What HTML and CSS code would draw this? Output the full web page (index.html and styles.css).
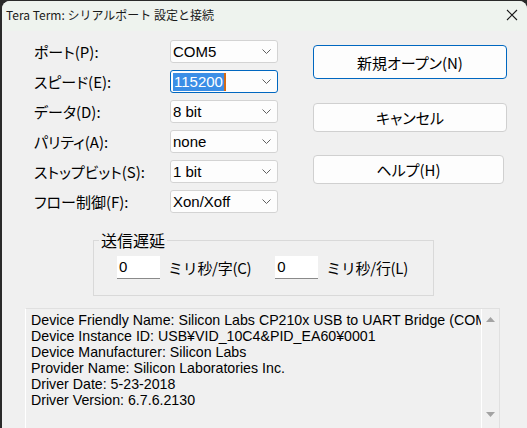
FILE: index.html
```html
<!DOCTYPE html>
<html lang="ja">
<head>
<meta charset="utf-8">
<link rel="stylesheet" href="styles.css">
</head>
<body>
<div class="window">
  <div class="titlebar">
    <span class="title">Tera Term: シリアルポート 設定と接続</span>
    <svg class="close" width="12" height="12" viewBox="0 0 12 12"><path d="M1 1L11 11M11 1L1 11" stroke="#1a1a1a" stroke-width="1.1" fill="none"/></svg>
  </div>
  <div class="content">
    <div class="top">
      <div class="form">
        <div class="row"><span class="label">ポート(P):</span><div class="combo"><span class="val">COM5</span><svg class="chev" width="9" height="5" viewBox="0 0 9 5"><path d="M0.5 0.5L4.5 4.5L8.5 0.5" stroke="#606060" fill="none"/></svg></div></div>
        <div class="row"><span class="label">スピード(E):</span><div class="combo focus"><span class="val"><span class="sel">115200</span><span class="caret"></span></span><svg class="chev" width="9" height="5" viewBox="0 0 9 5"><path d="M0.5 0.5L4.5 4.5L8.5 0.5" stroke="#606060" fill="none"/></svg></div></div>
        <div class="row"><span class="label">データ(D):</span><div class="combo"><span class="val">8 bit</span><svg class="chev" width="9" height="5" viewBox="0 0 9 5"><path d="M0.5 0.5L4.5 4.5L8.5 0.5" stroke="#606060" fill="none"/></svg></div></div>
        <div class="row"><span class="label">パリティ(A):</span><div class="combo"><span class="val">none</span><svg class="chev" width="9" height="5" viewBox="0 0 9 5"><path d="M0.5 0.5L4.5 4.5L8.5 0.5" stroke="#606060" fill="none"/></svg></div></div>
        <div class="row"><span class="label">ストップビット(S):</span><div class="combo"><span class="val">1 bit</span><svg class="chev" width="9" height="5" viewBox="0 0 9 5"><path d="M0.5 0.5L4.5 4.5L8.5 0.5" stroke="#606060" fill="none"/></svg></div></div>
        <div class="row"><span class="label">フロー制御(F):</span><div class="combo"><span class="val">Xon/Xoff</span><svg class="chev" width="9" height="5" viewBox="0 0 9 5"><path d="M0.5 0.5L4.5 4.5L8.5 0.5" stroke="#606060" fill="none"/></svg></div></div>
      </div>
      <div class="buttons">
        <div class="btn default">新規オープン(N)</div>
        <div class="btn">キャンセル</div>
        <div class="btn help">ヘルプ(H)</div>
      </div>
    </div>
    <fieldset class="group">
      <legend>送信遅延</legend>
      <div class="delays">
        <div class="edit">0</div><span class="dlabel">ミリ秒/字(C)</span>
        <div class="edit">0</div><span class="dlabel">ミリ秒/行(L)</span>
      </div>
    </fieldset>
    <div class="info">
      <div class="text">
        <div>Device Friendly Name: Silicon Labs CP210x USB to UART Bridge (COM5)</div>
        <div>Device Instance ID: USB¥VID_10C4&amp;PID_EA60¥0001</div>
        <div>Device Manufacturer: Silicon Labs</div>
        <div>Provider Name: Silicon Laboratories Inc.</div>
        <div>Driver Date: 5-23-2018</div>
        <div>Driver Version: 6.7.6.2130</div>
      </div>
      <div class="scroll">
        <svg width="9" height="5" viewBox="0 0 9 5"><path d="M0 5L4.5 0L9 5Z" fill="#a3a3a3"/></svg>
        <svg width="9" height="5" viewBox="0 0 9 5"><path d="M0 0L4.5 5L9 0Z" fill="#a3a3a3"/></svg>
      </div>
    </div>
  </div>
</div>
</body>
</html>
```
FILE: styles.css
```css
html, body {
  margin: 0;
  padding: 0;
  background: #2a2a2a;
  width: 527px;
  height: 428px;
  overflow: hidden;
}
.window {
  margin: 1px 0 0 2px;
  width: 525px;
  height: 427px;
  background: #f0f0f0;
  border-radius: 8px 8px 0 0;
  overflow: hidden;
  font-family: "Noto Sans CJK JP", sans-serif;
  color: #000;
}
.titlebar {
  height: 30px;
  background: #eef3ee;
  display: flex;
  align-items: center;
  justify-content: space-between;
  padding: 0 9px 0 4px;
}
.title {
  font-size: 12px;
  color: #1a1a1a;
  line-height: 1;
  margin-top: -2px;
}
.close { margin-top: -3px; }
.content {
  padding-top: 9px;
}
.top {
  display: flex;
}
.form {
  padding-left: 32px;
  display: flex;
  flex-direction: column;
  gap: 7px;
}
.row {
  display: flex;
  align-items: center;
  height: 23px;
}
.label {
  width: 136px;
  font-size: 15px;
  font-feature-settings: "palt";
  line-height: 1;
}
.combo {
  box-sizing: border-box;
  width: 108px;
  height: 23px;
  background: #fdfdfd;
  border: 1px solid #d3d3d3;
  border-radius: 3px;
  display: flex;
  align-items: center;
  justify-content: space-between;
  padding: 0 6px 0 2px;
}
.combo.focus {
  border-color: #0067c0;
}
.val {
  font-family: "Liberation Sans", sans-serif;
  font-size: 15px;
  line-height: 18px;
  display: flex;
  align-items: center;
}
.sel {
  background: #3b8ee6;
  color: #fff;
  padding: 0 1px;
}
.caret {
  width: 2px;
  height: 18px;
  background: #d46a16;
}
.buttons {
  margin-left: 35px;
  margin-top: 5px;
  display: flex;
  flex-direction: column;
}
.btn {
  box-sizing: border-box;
  width: 194px;
  height: 29px;
  background: #fdfdfd;
  border: 1px solid #d0d0d0;
  border-radius: 4px;
  display: flex;
  align-items: center;
  justify-content: center;
  font-size: 15px;
  font-feature-settings: "palt";
  margin-bottom: 23px;
}
.btn.default {
  height: 34px;
  border-color: #0067c0;
  margin-bottom: 24px;
}
.btn.help { width: 191px; }
.group {
  margin: 18px 0 0 91px;
  width: 341px;
  box-sizing: border-box;
  height: 65px;
  border: 1px solid #d9d9d9;
  border-radius: 0;
  padding: 0;
  min-width: 0;
}
.group legend {
  font-size: 16px;
  line-height: 18px;
  padding: 0 2px;
  margin-left: 5px;
}
.delays {
  display: flex;
  align-items: center;
  padding: 7px 0 0 23px;
  white-space: nowrap;
}
.edit {
  flex-shrink: 0;
  box-sizing: border-box;
  width: 43px;
  height: 23px;
  background: #fff;
  border-bottom: 1px solid #8a8a8a;
  font-family: "Liberation Sans", sans-serif;
  font-size: 15px;
  line-height: 22px;
  padding-left: 2px;
}
.dlabel {
  flex-shrink: 0;
  font-size: 15px;
  margin-left: 8px;
  margin-right: 24px;
  line-height: 1;
  letter-spacing: -0.3px;
}
.info {
  margin: 12px 0 0 23px;
  width: 475px;
  height: 130px;
  box-sizing: border-box;
  border: 1px solid #e0e0e0;
  border-left-color: #fff;
  display: flex;
}
.text {
  flex: 1;
  overflow: hidden;
  white-space: nowrap;
  padding: 3px 0 0 5px;
  font-family: "Liberation Sans", sans-serif;
  font-size: 14.2px;
  line-height: 16px;
}
.scroll {
  width: 17px;
  border-left: 1px solid #fff;
  display: flex;
  flex-direction: column;
  justify-content: space-between;
  align-items: center;
  padding: 8px 0 20px;
}
```
